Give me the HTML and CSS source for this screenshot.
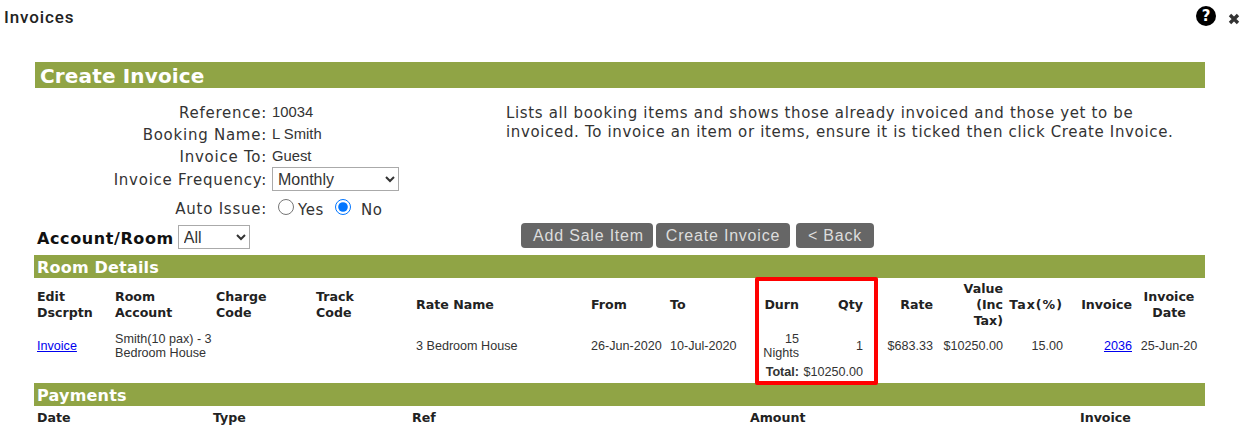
FILE: index.html
```html
<!DOCTYPE html>
<html lang="en">
<head>
    <meta charset="UTF-8">
    <title>Invoices</title>
    <link rel="stylesheet" href="styles.css">
</head>
<body>
    <div class="title-bar">
        <div class="title">Invoices</div>
        <div class="title-icons">
            <span class="help-icon">?</span>
            <svg class="close-icon" width="12" height="12" viewBox="0 0 12 12">
                <path d="M2 2L10 10M10 2L2 10" stroke="#333" stroke-width="3.4" fill="none"/>
            </svg>
        </div>
    </div>

    <div class="container">
        <div class="page-header">Create Invoice</div>

        <div class="top-section">
            <div class="form-section">
                <div class="form-row row-text">
                    <div class="form-label">Reference:</div>
                    <div class="form-value">10034</div>
                </div>
                <div class="form-row row-text">
                    <div class="form-label">Booking Name:</div>
                    <div class="form-value">L Smith</div>
                </div>
                <div class="form-row row-text">
                    <div class="form-label">Invoice To:</div>
                    <div class="form-value">Guest</div>
                </div>
                <div class="form-row row-select">
                    <div class="form-label">Invoice Frequency:</div>
                    <select class="select-frequency">
                        <option>Monthly</option>
                    </select>
                </div>
                <div class="form-row row-radio">
                    <div class="form-label">Auto Issue:</div>
                    <label class="radio-label"><input type="radio" name="auto_issue">Yes</label>
                    <label class="radio-label radio-no"><input type="radio" name="auto_issue" checked>No</label>
                </div>
            </div>
            <div class="description">
                Lists all booking items and shows those already invoiced and those yet to be invoiced. To invoice an item or items, ensure it is ticked then click Create Invoice.
            </div>
        </div>

        <div class="action-row">
            <div class="account-filter">
                <span class="account-label">Account/Room</span>
                <select class="select-account">
                    <option>All</option>
                </select>
            </div>
            <div class="buttons">
                <button class="btn btn-sale">Add Sale Item</button>
                <button class="btn btn-create">Create Invoice</button>
                <button class="btn btn-back">&lt; Back</button>
            </div>
        </div>

        <div class="section-header">Room Details</div>
        <table class="room-table">
            <colgroup>
                <col class="c-edit"><col class="c-room"><col class="c-charge"><col class="c-track">
                <col class="c-rate-name"><col class="c-from"><col class="c-to"><col class="c-durn">
                <col class="c-qty"><col class="c-rate"><col class="c-value"><col class="c-tax">
                <col class="c-invoice"><col class="c-date">
            </colgroup>
            <thead>
                <tr>
                    <th>Edit<br>Dscrptn</th>
                    <th>Room<br>Account</th>
                    <th>Charge<br>Code</th>
                    <th>Track<br>Code</th>
                    <th>Rate Name</th>
                    <th>From</th>
                    <th>To</th>
                    <th class="right">Durn</th>
                    <th class="right">Qty</th>
                    <th class="right">Rate</th>
                    <th class="right">Value<br>(Inc<br>Tax)</th>
                    <th class="right tax-head">Tax(%)</th>
                    <th class="right">Invoice</th>
                    <th class="center">Invoice Date</th>
                </tr>
            </thead>
            <tbody>
                <tr class="item-row">
                    <td><a href="#">Invoice</a></td>
                    <td>Smith(10 pax) - 3 Bedroom House</td>
                    <td></td>
                    <td></td>
                    <td>3 Bedroom House</td>
                    <td>26-Jun-2020</td>
                    <td>10-Jul-2020</td>
                    <td class="right">15<br>Nights</td>
                    <td class="right">1</td>
                    <td class="right">$683.33</td>
                    <td class="right">$10250.00</td>
                    <td class="right">15.00</td>
                    <td class="right"><a href="#">2036</a></td>
                    <td class="center">25-Jun-20</td>
                </tr>
                <tr class="total-row">
                    <td colspan="7"></td>
                    <td class="right total-label">Total:</td>
                    <td class="right">$10250.00</td>
                    <td colspan="5"></td>
                </tr>
            </tbody>
        </table>

        <div class="section-header">Payments</div>
        <table class="payment-table">
            <colgroup>
                <col class="p-date"><col class="p-type"><col class="p-ref"><col class="p-amount"><col class="p-invoice"><col>
            </colgroup>
            <thead>
                <tr>
                    <th>Date</th>
                    <th>Type</th>
                    <th>Ref</th>
                    <th>Amount</th>
                    <th>Invoice</th>
                    <th></th>
                </tr>
            </thead>
        </table>
    </div>

    <!-- marcacao vermelha sobre as colunas Durn/Qty -->
    <div class="highlight-box"></div>
</body>
</html>
```

FILE: styles.css
```css
* {
    margin: 0;
    padding: 0;
    box-sizing: border-box;
}

body {
    background-color: white;
    font-family: "DejaVu Sans", Verdana, sans-serif;
    color: #333;
    position: relative;
    overflow: hidden;
    height: 445px;
}

.title-bar {
    display: flex;
    justify-content: space-between;
    height: 62px;
    padding: 8px 7px 0 4px;
}

.title {
    font-family: Roboto, "Liberation Sans", Arial, sans-serif;
    font-size: 17px;
    font-weight: 500;
    letter-spacing: 0.9px;
    color: #222;
    line-height: 19px;
}

.title-icons {
    display: flex;
    align-items: flex-start;
    gap: 12px;
}

.help-icon {
    width: 20px;
    height: 20px;
    margin-top: -2px;
    border-radius: 50%;
    background-color: black;
    color: white;
    font-size: 15px;
    font-weight: bold;
    line-height: 20px;
    text-align: center;
}

.close-icon {
    margin-top: 5px;
}

.container {
    width: 1171px;
    margin-left: 34px;
}

.page-header {
    margin-left: 1px;
    height: 26px;
    padding-left: 5px;
    background-color: #90a445;
    color: white;
    font-size: 20px;
    font-weight: bold;
    letter-spacing: 0.15px;
    line-height: 28px;
}

.top-section {
    display: flex;
    height: 135px;
    padding-top: 13px;
}

.form-section {
    width: 472px;
}

.form-row {
    display: flex;
    align-items: center;
}

.row-text {
    height: 22px;
}

.row-select {
    height: 24px;
}

.row-radio {
    height: 34px;
    padding-top: 4px;
}

.form-label {
    width: 233px;
    margin-top: 1px;
    margin-right: 5px;
    text-align: right;
    font-size: 15px;
    letter-spacing: 0.75px;
}

.row-radio .form-label {
    margin-top: 0;
    margin-bottom: 3px;
}

.form-value {
    font-family: "Liberation Sans", Arial, sans-serif;
    font-size: 14.8px;
    margin-bottom: 1px;
}

select {
    height: 24px;
    border: 1px solid #aaa;
    border-radius: 0;
    background-color: white;
    color: #333;
    font-family: "Liberation Sans", Arial, sans-serif;
    font-size: 16px;
}

.select-frequency {
    width: 127px;
    padding-left: 1px;
}

.select-account {
    width: 72px;
    margin-top: 2px;
    padding-left: 1px;
}

.radio-label {
    display: flex;
    align-items: center;
    font-size: 15px;
    letter-spacing: 0.6px;
}

.radio-label input {
    width: 16px;
    height: 16px;
    margin: 0 4px 6px 6px;
}

.radio-no input {
    margin: 0 10px 6px 11px;
}

.description {
    width: 680px;
    padding-top: 3px;
    font-size: 15px;
    letter-spacing: 0.65px;
    line-height: 19px;
    color: #333;
}

.action-row {
    display: flex;
    align-items: flex-start;
    height: 32px;
}

.account-filter {
    display: flex;
    align-items: center;
    width: 487px;
    padding-left: 3px;
}

.account-label {
    font-size: 16px;
    font-weight: bold;
    letter-spacing: 0.6px;
    color: #111;
    margin-top: 5px;
    margin-right: 4px;
}

.buttons {
    display: flex;
    height: 25px;
}

.btn {
    height: 25px;
    border: none;
    border-radius: 4px;
    background-color: #666;
    color: #ddd;
    font-family: "Liberation Sans", Arial, sans-serif;
    font-size: 16px;
    letter-spacing: 0.8px;
}

.btn-sale {
    width: 132px;
    margin-right: 3px;
    padding-left: 3px;
}

.btn-create {
    width: 134px;
    margin-right: 6px;
}

.btn-back {
    width: 78px;
}

.section-header {
    height: 23px;
    padding-left: 3px;
    background-color: #90a445;
    color: white;
    font-size: 16px;
    font-weight: bold;
    letter-spacing: 0.2px;
    line-height: 25px;
}

table {
    width: 1171px;
    table-layout: fixed;
    border-collapse: collapse;
}

th {
    padding: 2px 1px 0 3px;
    text-align: left;
    font-size: 12.6px;
    line-height: 16px;
    color: #222;
}

td {
    padding: 2px 1px 0 3px;
    font-family: "Liberation Sans", Arial, sans-serif;
    font-size: 12.6px;
    line-height: 14px;
}

.room-table thead th {
    height: 52px;
}

.payment-table th {
    padding-top: 4px;
}

.tax-head {
    letter-spacing: 1px;
}

.right {
    text-align: right;
}

th.center,
td.center {
    padding: 2px 2px 0;
    text-align: center;
}

a {
    color: #0000ee;
}

.item-row td {
    height: 30px;
}

.total-row td {
    height: 23px;
    padding: 1px 1px 1px 3px;
}

.total-label {
    font-weight: bold;
}

.c-edit { width: 78px; }
.c-room { width: 101px; }
.c-charge { width: 100px; }
.c-track { width: 100px; }
.c-rate-name { width: 175px; }
.c-from { width: 79px; }
.c-to { width: 74px; }
.c-durn { width: 59px; }
.c-qty { width: 64px; }
.c-rate { width: 70px; }
.c-value { width: 70px; }
.c-tax { width: 60px; }
.c-invoice { width: 69px; }
.c-date { width: 72px; }

.p-date { width: 176px; }
.p-type { width: 199px; }
.p-ref { width: 338px; }
.p-amount { width: 330px; }
.p-invoice { width: 69px; }

.highlight-box {
    position: absolute;
    left: 755px;
    top: 277px;
    width: 123px;
    height: 108px;
    border: 4px solid #f00;
    border-radius: 2px;
}
```
